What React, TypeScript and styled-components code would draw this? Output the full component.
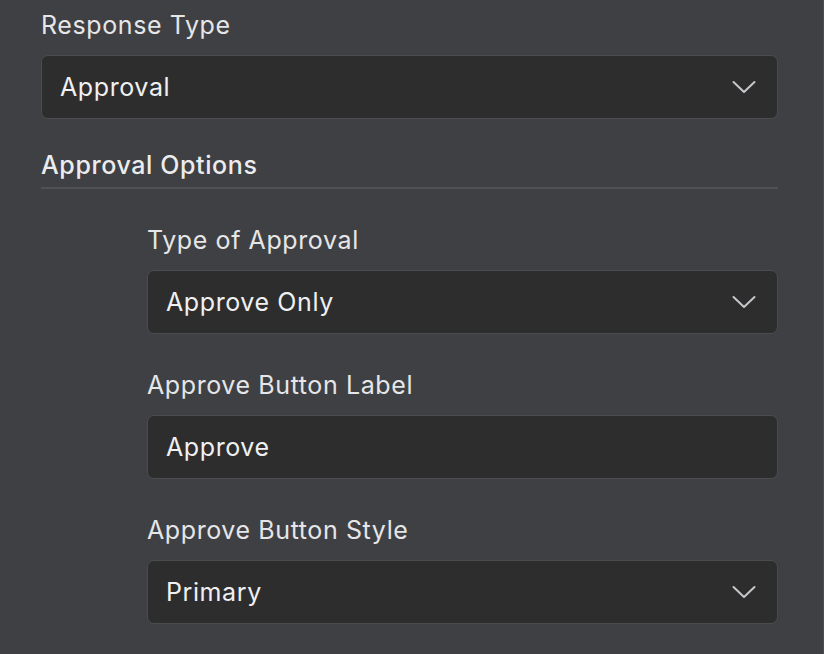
import React from 'react';
import styled, { createGlobalStyle } from 'styled-components';

const GlobalStyle = createGlobalStyle`
    html, body {
        margin: 0;
        padding: 0;
        background-color: #3f4043;
    }
    body {
        font-family: Inter, "Noto Sans", "Liberation Sans", sans-serif;
        -webkit-font-smoothing: antialiased;
    }
`;

const Panel = styled.div`
    box-sizing: border-box;
    width: 824px;
    height: 654px;
    overflow: hidden;
    background-color: #3f4043;
    border-right: 1px solid #4c4d50;
    padding: 11px 0 0 41px;
`;

const Content = styled.div`
    width: 737px;
    display: flex;
    flex-direction: column;
`;

const Field = styled.div<{ spaced?: boolean }>`
    display: flex;
    flex-direction: column;
    gap: 15px;
    margin-top: ${(props) => (props.spaced ? '37px' : '0')};
`;

const Label = styled.div`
    font-size: 25px;
    line-height: 29px;
    color: #e6e6e8;
    letter-spacing: 0.6px;
`;

const SectionTitle = styled.div`
    margin-top: 32px;
    font-size: 25px;
    line-height: 29px;
    font-weight: 500;
    color: #ececee;
    letter-spacing: 0.6px;
    padding-bottom: 7px;
    border-bottom: 2px solid #505154;
`;

const Nested = styled.div`
    display: flex;
    flex-direction: column;
    padding-left: 106px;
    margin-top: 37px;
`;

const Box = styled.div`
    box-sizing: border-box;
    height: 64px;
    display: flex;
    align-items: center;
    justify-content: space-between;
    padding: 0 21px 0 18px;
    background-color: #2d2d2e;
    border: 1.5px solid #4b4c4f;
    border-radius: 7px;
    font-size: 25px;
    letter-spacing: 0.6px;
    color: #f0f0f2;
`;

const Chevron = () => (
    <svg width="24" height="14" viewBox="0 0 24 14" fill="none">
        <path d="M1.5 2 L12 12 L22.5 2" stroke="#c6c7cb" strokeWidth="2" strokeLinecap="round" strokeLinejoin="round" />
    </svg>
);

function SelectBox({ value }: { value: string }) {
    return (
        <Box>
            <span>{value}</span>
            <Chevron />
        </Box>
    );
}

export default function App() {
    return (
        <>
            <GlobalStyle />
            <Panel>
                <Content>
                    <Field>
                        <Label>Response Type</Label>
                        <SelectBox value="Approval" />
                    </Field>
                    <SectionTitle>Approval Options</SectionTitle>
                    <Nested>
                        <Field>
                            <Label>Type of Approval</Label>
                            <SelectBox value="Approve Only" />
                        </Field>
                        <Field spaced>
                            <Label>Approve Button Label</Label>
                            <Box>
                                <span>Approve</span>
                            </Box>
                        </Field>
                        <Field spaced>
                            <Label>Approve Button Style</Label>
                            <SelectBox value="Primary" />
                        </Field>
                    </Nested>
                </Content>
            </Panel>
        </>
    );
}
